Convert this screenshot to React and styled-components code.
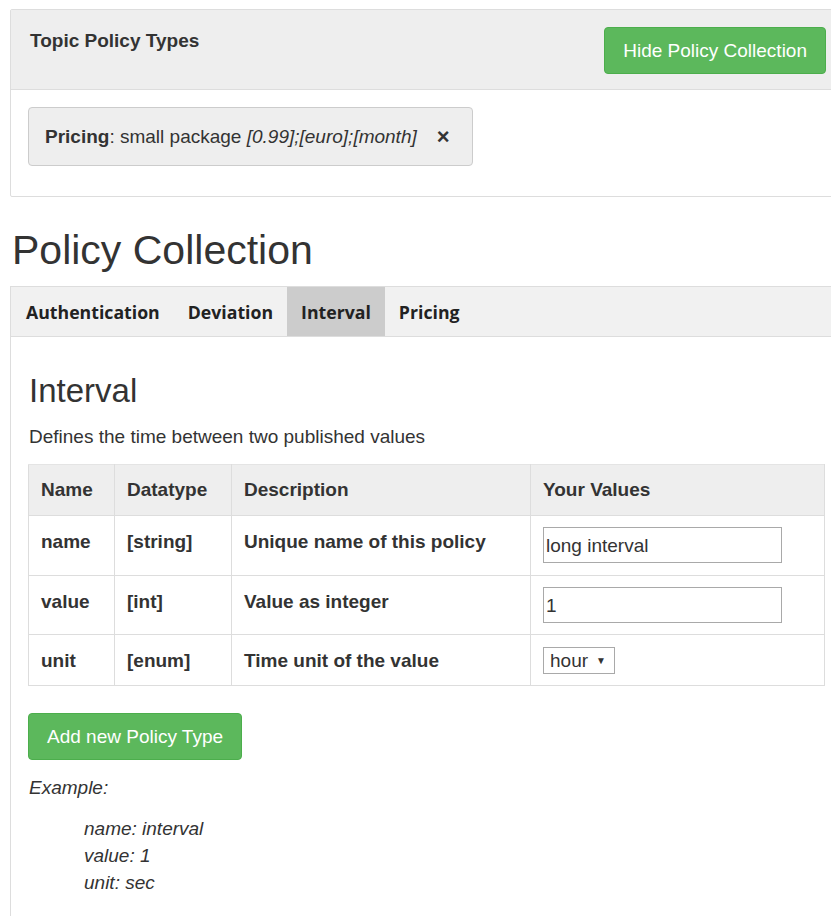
import React from "react";
import styled, { createGlobalStyle } from "styled-components";

const GlobalStyle = createGlobalStyle`
  html, body {
    margin: 0;
    padding: 0;
    background: #fff;
    overflow-x: hidden;
  }
  body {
    font-family: "Liberation Sans", Arial, sans-serif;
    color: #333;
  }
`;

const Page = styled.div`
  padding: 9px 0 0 10px;
`;

const Panel = styled.section`
  border: 1px solid #ddd;
  border-radius: 2px;
  margin-right: -8px;
`;

const PanelHeader = styled.header`
  display: flex;
  justify-content: space-between;
  align-items: flex-start;
  height: 80px;
  box-sizing: border-box;
  padding: 17px 12px 0 19px;
  background: #eee;
  border-bottom: 1px solid #ddd;
`;

const PanelTitle = styled.h4`
  margin: 3px 0 0;
  font-size: 19px;
  font-weight: 700;
`;

const Button = styled.button`
  font-family: "Liberation Sans", Arial, sans-serif;
  font-size: 19px;
  color: #fff;
  background: #5cb85c;
  border: 1px solid #4cae4c;
  border-radius: 4px;
  padding: 0 18px;
  height: 47px;
  cursor: pointer;
`;

const PanelBody = styled.div`
  padding: 17px 17px 30px;
`;

const Chip = styled.div`
  display: inline-flex;
  align-items: center;
  gap: 20px;
  height: 59px;
  box-sizing: border-box;
  padding: 0 22px 0 16px;
  background: #eee;
  border: 1px solid #ccc;
  border-radius: 4px;
  font-size: 19px;
`;

const Close = styled.span`
  font-weight: 700;
  font-size: 22px;
  line-height: 1;
`;

const PageTitle = styled.h1`
  margin: 31px 0 13px 2px;
  font-size: 41px;
  font-weight: 400;
  line-height: 1.1;
`;

const TabBar = styled.nav`
  display: flex;
  height: 51px;
  box-sizing: border-box;
  background: #f1f1f1;
  border: 1px solid #ddd;
  border-right: none;
  margin-right: -8px;
`;

const Tab = styled.div`
  display: flex;
  align-items: center;
  padding: 0 14px;
  font-family: "Open Sans", "Liberation Sans", sans-serif;
  font-size: 17.7px;
  font-weight: 700;
  color: #222;
  background: ${(p) => (p.active ? "#ccc" : "transparent")};
  &:first-child {
    padding-left: 15px;
  }
`;

const TabContent = styled.div`
  border-left: 1px solid #ddd;
  padding: 30px 0 20px 17px;
  min-height: 560px;
`;

const SectionTitle = styled.h3`
  margin: 5px 0 16px 1px;
  font-size: 33px;
  font-weight: 400;
`;

const Lead = styled.p`
  margin: 0 0 16px 1px;
  font-size: 19px;
`;

const Table = styled.table`
  border-collapse: collapse;
  width: 797px;
  font-size: 19px;
`;

const Th = styled.th`
  text-align: left;
  font-weight: 700;
  height: 50px;
  padding: 0 12px;
  background: #eee;
  border: 1px solid #ddd;
  border-top-color: #e4e4e4;
`;

const Td = styled.td`
  font-weight: 700;
  vertical-align: top;
  padding: 15px 12px 0;
  height: ${(p) => p.h}px;
  box-sizing: border-box;
  border: 1px solid #ddd;
`;

const ValueCell = styled(Td)`
  font-weight: 400;
  padding-top: 11px;
`;

const TextInput = styled.input`
  width: 239px;
  height: 36px;
  box-sizing: border-box;
  padding: 2px 2px 0;
  font-family: "Liberation Sans", Arial, sans-serif;
  font-size: 19px;
  color: #333;
  border: 1px solid #a9a9a9;
  border-radius: 0;
`;

const Select = styled.div`
  display: inline-flex;
  align-items: center;
  gap: 8px;
  height: 27px;
  box-sizing: border-box;
  padding: 0 8px 0 6px;
  border: 1px solid #a9a9a9;
  font-size: 19px;
  margin-top: 1px;
`;

const Caret = styled.span`
  font-size: 10px;
  color: #333;
`;

const AddButton = styled(Button)`
  margin-top: 27px;
  padding: 0 18px;
`;

const ExampleLabel = styled.p`
  margin: 17px 0 0 1px;
  font-style: italic;
  font-size: 19px;
`;

const ExampleList = styled.ul`
  list-style: none;
  margin: 16px 0 0;
  padding-left: 56px;
  font-style: italic;
  font-size: 19px;
  line-height: 27px;
`;

const rows = [
  { name: "name", type: "[string]", desc: "Unique name of this policy", h: 60, value: "long interval" },
  { name: "value", type: "[int]", desc: "Value as integer", h: 59, value: "1" },
  { name: "unit", type: "[enum]", desc: "Time unit of the value", h: 51, select: "hour" },
];

const tabs = ["Authentication", "Deviation", "Interval", "Pricing"];

export default function App() {
  return (
    <Page>
      <GlobalStyle />
      <Panel>
        <PanelHeader>
          <PanelTitle>Topic Policy Types</PanelTitle>
          <Button>Hide Policy Collection</Button>
        </PanelHeader>
        <PanelBody>
          <Chip>
            <span>
              <b>Pricing</b>: small package <i>[0.99];[euro];[month]</i>
            </span>
            <Close>×</Close>
          </Chip>
        </PanelBody>
      </Panel>

      <PageTitle>Policy Collection</PageTitle>

      <TabBar>
        {tabs.map((t) => (
          <Tab key={t} active={t === "Interval"}>
            {t}
          </Tab>
        ))}
      </TabBar>

      <TabContent>
        <SectionTitle>Interval</SectionTitle>
        <Lead>Defines the time between two published values</Lead>
        <Table>
          <colgroup>
            <col style={{ width: 86 }} />
            <col style={{ width: 117 }} />
            <col style={{ width: 299 }} />
            <col />
          </colgroup>
          <thead>
            <tr>
              <Th>Name</Th>
              <Th>Datatype</Th>
              <Th>Description</Th>
              <Th>Your Values</Th>
            </tr>
          </thead>
          <tbody>
            {rows.map((r) => (
              <tr key={r.name}>
                <Td h={r.h}>{r.name}</Td>
                <Td h={r.h}>{r.type}</Td>
                <Td h={r.h}>{r.desc}</Td>
                <ValueCell h={r.h}>
                  {r.select ? (
                    <Select>
                      {r.select}
                      <Caret>▼</Caret>
                    </Select>
                  ) : (
                    <TextInput defaultValue={r.value} />
                  )}
                </ValueCell>
              </tr>
            ))}
          </tbody>
        </Table>

        <AddButton>Add new Policy Type</AddButton>
        <ExampleLabel>Example:</ExampleLabel>
        <ExampleList>
          <li>name: interval</li>
          <li>value: 1</li>
          <li>unit: sec</li>
        </ExampleList>
      </TabContent>
    </Page>
  );
}
